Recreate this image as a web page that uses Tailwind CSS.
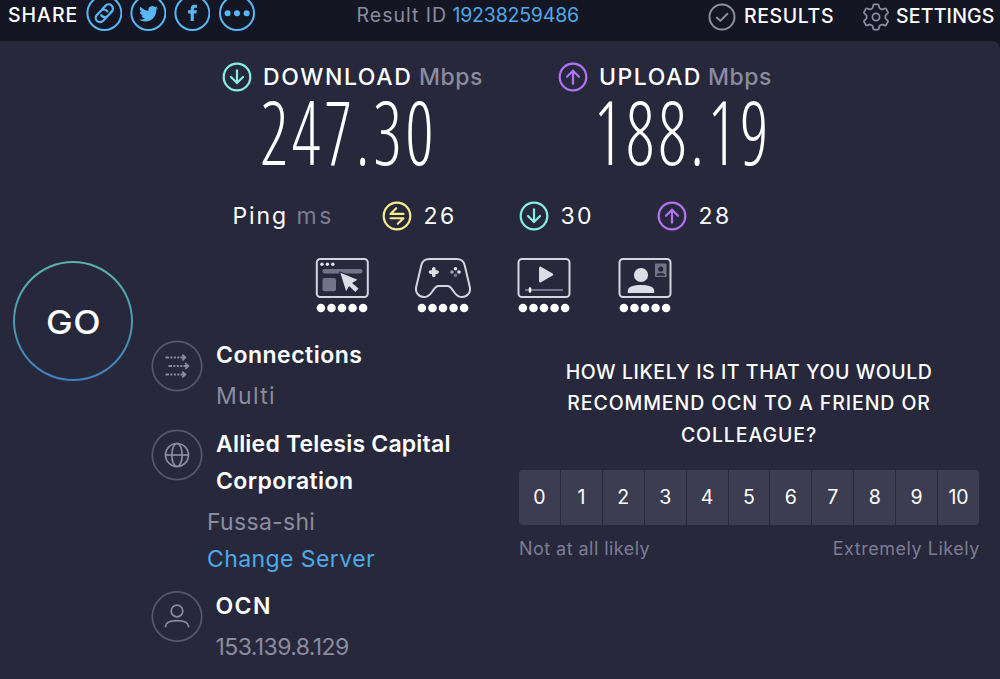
<!DOCTYPE html>
<html lang="en">
<head>
<meta charset="utf-8">
<title>Speed test result</title>
<script src="https://cdn.jsdelivr.net/npm/@tailwindcss/browser@4"></script>
</head>
<body class="w-[1000px] h-[679px] overflow-hidden bg-[#151623] text-white font-['Inter',sans-serif]">
<svg class="hidden">
  <symbol id="down" viewBox="0 0 30 30"><circle cx="15" cy="15" r="13.3" fill="none" stroke="currentColor" stroke-width="2.2"/><path d="M15 8.3v12.4M9 15l6 6 6-6" fill="none" stroke="currentColor" stroke-width="2.2" stroke-linecap="round"/></symbol>
  <symbol id="up" viewBox="0 0 30 30"><circle cx="15" cy="15" r="13.3" fill="none" stroke="currentColor" stroke-width="2.2"/><path d="M15 21.7V9M9 14.7l6-6 6 6" fill="none" stroke="currentColor" stroke-width="2.2" stroke-linecap="round"/></symbol>
  <symbol id="dots" viewBox="0 0 52 10"><g fill="#fff"><circle cx="4.9" cy="5" r="4.3"/><circle cx="15.5" cy="5" r="4.3"/><circle cx="26" cy="5" r="4.3"/><circle cx="36.6" cy="5" r="4.3"/><circle cx="47.1" cy="5" r="4.3"/></g></symbol>
</svg>

<header class="flex h-[41px] items-start whitespace-nowrap text-[19.5px] leading-[31px]">
  <span class="w-[79px] pl-[8px] font-medium tracking-[1px]">SHARE</span>
  <div class="ml-[7px] flex gap-[8px] text-[#58b8f6] -mt-[5px]">
    <svg class="size-[36px]" viewBox="0 0 36 36" fill="none" stroke="currentColor" stroke-width="2"><circle cx="18.4" cy="18" r="17"/><g transform="rotate(-47 18.3 18.3)" stroke-width="2.2" stroke-linecap="round"><path d="M17 22.6H12a4.3 4.3 0 0 1 0-8.6h5.600a4.300 4.300 0 0 1 4.200 5.200"/><path d="M19.600 14h5a4.300 4.300 0 0 1 0 8.600H19a4.300 4.300 0 0 1-4.200-5.200"/></g></svg>
    <svg class="size-[36px]" viewBox="0 0 36 36" fill="none" stroke="currentColor" stroke-width="2"><circle cx="18.4" cy="18" r="17"/><path transform="translate(9.200 9.300) scale(.79)" fill="currentColor" stroke="none" d="M23.95 4.57a10 10 0 0 1-2.82.77 4.96 4.96 0 0 0 2.16-2.72c-.95.55-2 .95-3.13 1.18a4.92 4.92 0 0 0-8.38 4.48C7.69 8.1 4.07 6.13 1.64 3.16a4.92 4.92 0 0 0 1.52 6.57 4.9 4.9 0 0 1-2.23-.61v.06a4.92 4.92 0 0 0 3.95 4.83 4.9 4.9 0 0 1-2.21.08 4.94 4.94 0 0 0 4.6 3.42A9.87 9.87 0 0 1 0 19.54a14 14 0 0 0 7.55 2.21c9.05 0 14-7.5 14-13.98 0-.21 0-.42-.02-.63a9.94 9.94 0 0 0 2.46-2.55z"/></svg>
    <svg class="size-[36px]" viewBox="0 0 36 36" fill="none" stroke="currentColor" stroke-width="2"><circle cx="18.4" cy="18" r="17"/><path fill="currentColor" stroke="none" d="M16.700 26v-7.600H14v-3.100h2.700V14c0-2.800 1.600-4.200 4.100-4.200.9 0 1.800.1 2.200.2v2.800h-1.500c-1.300 0-1.700.7-1.700 1.600v.9h3.100l-.5 3.100h-2.600V26z"/></svg>
    <svg class="size-[36px] ml-[.5px]" viewBox="0 0 36 36" fill="none" stroke="currentColor" stroke-width="2"><circle cx="18" cy="18" r="17"/><g fill="currentColor" stroke="none"><circle cx="8.6" cy="18.200" r="3"/><circle cx="18" cy="18.200" r="3"/><circle cx="27.6" cy="18.200" r="3"/></g></svg>
  </div>
  <div class="ml-[102px] w-[351.500px] text-[#8b8ca0]"><span class="inline-block w-[96px] tracking-[1px]">Result ID</span><span class="text-[#4fa9e6] tracking-[-0.2px]">19238259486</span></div>
  <svg class="mt-[3px] size-[28px]" viewBox="0 0 28 28" fill="none" stroke="#8d8ea4" stroke-width="2"><circle cx="14" cy="14" r="12.5"/><path d="M8.9 14.6l3.4 3.3 7.1-7.2" stroke-linecap="round" stroke-linejoin="round"/></svg>
  <span class="ml-[8px] w-[117.500px] font-medium leading-[33px] tracking-[0.6px]">RESULTS</span>
  <svg class="mt-[3px] size-[28px]" viewBox="0 0 28 28" fill="none" stroke="#8d8ea4" stroke-width="1.7" stroke-linejoin="round"><circle cx="14" cy="14" r="3.6"/><path d="M12.2 1.3h3.6q.9 0 1 .9l.4 2.2q.1.7.8 1l1.400.8q.7.4 1.300.1l2.100-.8q.9-.3 1.300.4l1.800 3.100q.5.8-.2 1.400l-1.700 1.400q-.6.5-.6 1.200v1.900q0 .7.6 1.200l1.700 1.400q.7.6.2 1.400l-1.800 3.100q-.4.8-1.300.4l-2.100-.8q-.7-.2-1.300.1l-1.400.8q-.6.4-.8 1l-.4 2.200q-.1.9-1 .9h-3.600q-.9 0-1-.9l-.4-2.200q-.1-.7-.8-1l-1.400-.8q-.6-.4-1.300-.1l-2.100.8q-.9.3-1.300-.4l-1.800-3.100q-.5-.8.2-1.400l1.700-1.400q.6-.5.6-1.200v-1.900q0-.7-.6-1.200l-1.700-1.400q-.7-.6-.2-1.400l1.800-3.100q.4-.8 1.300-.4l2.100.8q.7.2 1.300-.1l1.400-.8q.6-.4.8-1l.4-2.200q.1-.9 1-.9z"/></svg>
  <span class="ml-[6.500px] font-medium leading-[33px] tracking-[0.2px]">SETTINGS</span>
</header>

<main class="flex h-[638px] rounded-tr-lg bg-[#27283b] whitespace-nowrap">
  <div class="w-[133px] shrink-0 pl-[13px] pt-[220px]">
    <div class="size-[120px] rounded-full bg-linear-to-b from-[#5bb5a8] to-[#3f7fc0] p-[1.7px]">
      <div class="flex size-full items-center justify-center rounded-full bg-[#27283b] pt-[3px] text-[33px] font-medium tracking-[.5px]"><span class="inline-block origin-center scale-x-[1.08]">GO</span></div>
    </div>
  </div>

  <div class="flex-1">
    <section class="flex pl-[88.500px] pt-[19px] text-[23px]">
      <div class="w-[336.500px]">
        <div class="flex h-[34px] items-center font-medium">
          <svg class="size-[30px] text-[#86efe4]"><use href="#down"/></svg>
          <span class="ml-[11.500px] w-[156px] tracking-[1.6px]">DOWNLOAD</span><span class="text-[#8b8ca0] tracking-[0.5px]">Mbps</span>
        </div>
        <div class="h-[80px] origin-left translate-x-[38px] scale-x-[0.79] text-[88px] leading-[75px] font-light font-stretch-condensed font-['Open_Sans',sans-serif] tracking-[4.600px]">247.30</div>
      </div>
      <div>
        <div class="flex h-[34px] items-center font-medium">
          <svg class="size-[30px] text-[#b373f5]"><use href="#up"/></svg>
          <span class="ml-[11px] w-[109px] tracking-[1.5px]">UPLOAD</span><span class="text-[#8b8ca0] tracking-[0.5px]">Mbps</span>
        </div>
        <div class="h-[80px] origin-left translate-x-[36px] scale-x-[0.79] text-[88px] leading-[75px] font-light font-stretch-condensed font-['Open_Sans',sans-serif] tracking-[4.800px]">188.19</div>
      </div>
    </section>

    <section class="mt-[25px] flex h-[34px] items-center pl-[99.500px] text-[23px]">
      <span class="w-[64px] tracking-[1.9px]">Ping</span><span class="w-[85px] tracking-[2.5px] text-[#7c7d92]">ms</span>
      <svg class="size-[30px] text-[#f7ec8d]" viewBox="0 0 30 30" fill="none" stroke="currentColor" stroke-width="2.2"><circle cx="15" cy="15" r="13.3"/><path d="M14.200 7.200l-5.700 5.700h13M8.500 17.300h13l-5.700 5.500" stroke-width="2.100" stroke-linecap="round" stroke-linejoin="round"/></svg>
      <span class="ml-[12px] w-[95px] pt-px tracking-[2.4px]">26</span>
      <svg class="size-[30px] text-[#86efe4]"><use href="#down"/></svg>
      <span class="ml-[12px] w-[96px] pt-px tracking-[2.4px]">30</span>
      <svg class="size-[30px] text-[#b373f5]"><use href="#up"/></svg>
      <span class="ml-[12px] pt-px tracking-[2.4px]">28</span>
    </section>

    <section class="mt-[24px] flex gap-[45px] pl-[181px]">
      <div class="w-[56px]">
        <svg class="h-[42px] w-[56px]" viewBox="0 0 56 42"><rect x="2.8" y="2" width="51" height="38" rx="3.5" fill="none" stroke="#d3d5df" stroke-width="2"/><g fill="#e2e4ec"><circle cx="8" cy="7.2" r="1.7"/><circle cx="13.4" cy="7.2" r="1.7"/><circle cx="18.8" cy="7.2" r="1.7"/></g><g fill="#737487"><rect x="8.5" y="12" width="40" height="4.6" rx="2"/><rect x="8.5" y="21" width="13.5" height="13.2" rx="2"/></g><path d="M26.3 15.8l17.2 6.9-5.5 3.2 6.5 5.7-3.2 3.3-6.2-5.9-3 5.3z" fill="#dcdee7" stroke="#27283b" stroke-width="2.5" stroke-linejoin="round" paint-order="stroke"/></svg>
        <svg class="ml-[2px] mt-[4px] h-[10px] w-[52px]"><use href="#dots"/></svg>
      </div>
      <div class="w-[56px]">
        <svg class="h-[42px] w-[56px]" viewBox="0 0 56 42"><path d="M14.5 2h27c4.200 0 7.200 2.200 8.200 6.200L54.800 30c1.300 5.800-3 10-7.600 10-3.200 0-5.200-1.200-7-3.500l-4.200-5.600c-1-1.300-2-1.900-3.500-1.900h-9c-1.500 0-2.500.6-3.500 1.900l-4.200 5.600C14 38.800 12 40 8.800 40 4.200 40-.1 35.800 1.200 30L6.300 8.200C7.300 4.200 10.300 2 14.500 2z" fill="none" stroke="#d3d5df" stroke-width="2"/><path d="M18.800 11.800v6.600M15.500 15.100h6.600" stroke="#dcdee7" stroke-width="3.600" stroke-linecap="round"/><circle cx="40.500" cy="11.700" r="1.800" fill="#dcdee7"/><circle cx="44" cy="15" r="1.800" fill="#dcdee7"/><circle cx="37" cy="15" r="1.800" fill="#a0a1b0"/><circle cx="40.500" cy="18.400" r="1.800" fill="#737487"/></svg>
        <svg class="ml-[2px] mt-[4px] h-[10px] w-[52px]"><use href="#dots"/></svg>
      </div>
      <div class="w-[56px]">
        <svg class="h-[42px] w-[56px]" viewBox="0 0 56 42"><rect x="2.500" y="2" width="51" height="38" rx="3.500" fill="none" stroke="#d3d5df" stroke-width="2"/><path d="M24.300 10.800v13.400L36 17.500z" fill="#dcdee7" stroke="#dcdee7" stroke-width="2.500" stroke-linejoin="round"/><path d="M9 33h38" stroke="#737487" stroke-width="2"/><path d="M14 31.500v3" stroke="#fff" stroke-width="2.400" stroke-linecap="round"/></svg>
        <svg class="ml-[2px] mt-[4px] h-[10px] w-[52px]"><use href="#dots"/></svg>
      </div>
      <div class="w-[56px]">
        <svg class="h-[42px] w-[56px]" viewBox="0 0 56 42"><rect x="2.500" y="2" width="51" height="38" rx="3.500" fill="none" stroke="#d3d5df" stroke-width="2"/><circle cx="24" cy="18" r="7.100" fill="#dcdee7"/><path d="M10.800 36v-2c0-3.500 3.500-6 13.200-6s13.200 2.500 13.200 6v2z" fill="#dcdee7"/><rect x="38" y="6.500" width="11.500" height="13.500" rx="1" fill="#737487"/><circle cx="43.700" cy="12" r="2.600" fill="#27283b"/><path d="M39.500 18.700v-.4c0-1.500 1.700-2.200 4.200-2.200s4.200.7 4.200 2.200v.4z" fill="#27283b"/></svg>
        <svg class="ml-[2px] mt-[4px] h-[10px] w-[52px]"><use href="#dots"/></svg>
      </div>
    </section>

    <div class="flex">
      <section class="w-[386px] pl-[18px] pt-[24px] text-[23px] text-[#8b8ca0]">
        <div class="flex h-[89px]">
          <svg class="mt-[3px] size-[52px] shrink-0" viewBox="0 0 52 52" fill="none" stroke="#8b8ca0"><circle cx="26" cy="26" r="24.700" stroke="#56576b" stroke-width="1.700"/><g stroke-width="1.900"><path d="M14.500 17.500h3.500m1.300 0h2m1.500 0h2m1.500 0h2m1.200 0h5M17.500 26H21m1.300 0h2m1.500 0h2m1.500 0h2m1.200 0h5M14.500 34.500h3.500m1.300 0h2m1.500 0h2m1.500 0h2m1.200 0h5"/><path d="M31.300 14.600l2.900 2.900-2.900 2.900M34.300 23.100l2.900 2.900-2.900 2.900M31.300 31.600l2.900 2.900-2.900 2.900"/></g></svg>
          <div class="ml-[13px] pt-[3px]">
            <div class="h-[35px] leading-[31px] font-semibold text-white tracking-[0.5px]">Connections</div>
            <div class="h-[42px] leading-[42px] tracking-[1.3px]">Multi</div>
          </div>
        </div>
        <div class="flex h-[75px]">
          <svg class="mt-[3px] size-[52px] shrink-0" viewBox="0 0 52 52" fill="none" stroke="#8b8ca0" stroke-width="1.700"><circle cx="26" cy="26" r="24.700" stroke="#56576b"/><circle cx="26" cy="26" r="11.500"/><ellipse cx="26" cy="26" rx="5.200" ry="11.500"/><path d="M14.500 26h23"/></svg>
          <div class="ml-[13px] font-semibold leading-[36.500px] text-white">
            <div class="tracking-[0.200px]">Allied Telesis Capital</div>
            <div class="tracking-[0.400px]">Corporation</div>
          </div>
        </div>
        <div class="ml-[56px] mt-[3px] leading-[36.500px]">
          <div class="tracking-[0.300px]">Fussa-shi</div>
          <div class="text-[#4fa9e6] tracking-[0.420px]">Change Server</div>
        </div>
        <div class="mt-[12px] flex">
          <svg class="mt-[2px] size-[52px] shrink-0" viewBox="0 0 52 52" fill="none" stroke="#8b8ca0" stroke-width="1.700"><circle cx="26" cy="25.500" r="24.700" stroke="#56576b"/><circle cx="26" cy="20" r="5.800"/><path d="M14.500 36.300v-.8c0-3.600 4-5.800 11.500-5.800s11.500 2.200 11.500 5.800v.8"/></svg>
          <div class="ml-[12.500px] pt-[2px]">
            <div class="h-[35px] leading-[31px] font-semibold text-white tracking-[1.400px]">OCN</div>
            <div class="h-[42px] leading-[42px] tracking-[-0.600px]">153.139.8.129</div>
          </div>
        </div>
      </section>

      <section class="w-[460px] pt-[44px]">
        <h2 class="text-center text-[19.500px] font-medium leading-[31.300px]"><span class="block tracking-[0.560px]">HOW LIKELY IS IT THAT YOU WOULD</span><span class="block tracking-[0.900px]">RECOMMEND OCN TO A FRIEND OR</span><span class="block tracking-[0.900px]">COLLEAGUE?</span></h2>
        <div class="mt-[19px] grid h-[55px] grid-cols-11 gap-px overflow-hidden rounded text-center text-[19.500px] leading-[54px] *:bg-[#3c3d50]">
          <span>0</span><span>1</span><span>2</span><span>3</span><span>4</span><span>5</span><span>6</span><span>7</span><span>8</span><span>9</span><span>10</span>
        </div>
        <div class="mt-[8px] flex justify-between text-[18px] leading-[32px] text-[#7c7d92]"><span class="tracking-[0.450px]">Not at all likely</span><span class="-mr-px tracking-[0.530px]">Extremely Likely</span></div>
      </section>
    </div>
  </div>
</main>
</body>
</html>
